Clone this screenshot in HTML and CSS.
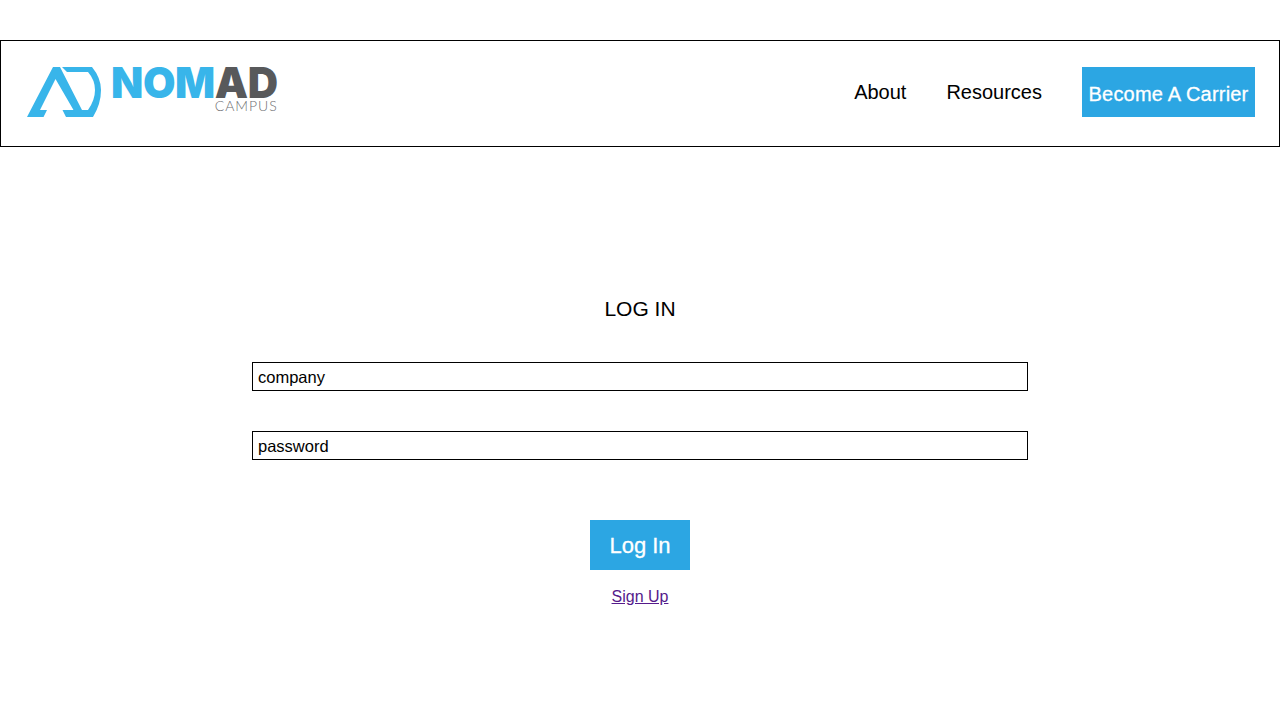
FILE: index.html
```html
<!DOCTYPE html>
<html lang="en">
<head>
<meta charset="utf-8">
<title>Nomad Campus - Log In</title>
<link rel="stylesheet" href="styles.css">
</head>
<body>
<header class="site-header">
  <a class="brand" href="#">
    <svg class="brand-mark" viewBox="0 0 75 52" width="75" height="52" aria-hidden="true">
      <path class="mark-fill" d="M0 51 L26 1 L33 1 L55 44 L61 44 Q68 34 68 24 Q68 14 61 6 L40 6 L35 1 L65 1 Q74 12 74 24 Q74 38 66 51 L39 51 L35.500 44 L46.500 44 L28.500 13 L13 44 L20 44 L16.500 51 Z"/>
    </svg>
    <span class="brand-text">
      <span class="brand-name"><span class="brand-nom">NOM</span><span class="brand-ad">AD</span></span>
      <span class="brand-sub">CAMPUS</span>
    </span>
  </a>
  <nav class="site-nav">
    <a class="nav-link" href="#">About</a>
    <a class="nav-link" href="#">Resources</a>
    <a class="nav-cta" href="#">Become A Carrier</a>
  </nav>
</header>
<main class="login">
  <h1 class="login-title">LOG IN</h1>
  <form class="login-form">
    <input class="login-input" type="text" placeholder="company">
    <input class="login-input" type="password" placeholder="password">
    <button class="login-button" type="button">Log In</button>
  </form>
  <a class="signup-link" href="#">Sign Up</a>
</main>
</body>
</html>
```
FILE: styles.css
```css
* { box-sizing: border-box; }
html, body { margin: 0; padding: 0; }
body {
  background: #fff;
  color: #000;
  font-family: "Liberation Sans", Arial, sans-serif;
  height: 728px;
  overflow: hidden;
  padding-top: 40px;
}
.site-header {
  height: 107px;
  border: 1px solid #000;
  display: flex;
  justify-content: space-between;
  align-items: flex-start;
  padding: 26px 24px 0 26px;
}
.brand {
  display: flex;
  align-items: flex-start;
  gap: 9px;
  margin-top: -1px;
  text-decoration: none;
}
.brand-mark { display: block; flex: none; }
.mark-fill { fill: #38b5ea; }
.brand-text { display: flex; flex-direction: column; align-items: flex-end; }
.brand-name {
  font-family: Inter, "Liberation Sans", sans-serif;
  font-weight: 900;
  font-size: 42px;
  line-height: 33px;
  letter-spacing: -0.4px;
  white-space: nowrap;
}
.brand-nom { color: #38b5ea; }
.brand-ad { color: #58595b; }
.brand-sub {
  font-family: Lato, "Liberation Sans", sans-serif;
  font-weight: 300;
  font-size: 14px;
  line-height: 14px;
  color: #6d6e71;
  letter-spacing: 1px;
}
.site-nav { display: flex; align-items: flex-start; }
.nav-link {
  color: #000;
  text-decoration: none;
  font-size: 20px;
  line-height: 50px;
  margin-right: 40px;
}
.nav-cta {
  display: block;
  width: 173px;
  height: 50px;
  background: #2ca6e3;
  color: #fff;
  font-size: 20px;
  letter-spacing: 0.2px;
  -webkit-text-stroke: 0.3px #fff;
  line-height: 54px;
  text-align: center;
  text-decoration: none;
  white-space: nowrap;
}
.login {
  display: flex;
  flex-direction: column;
  align-items: center;
  padding-top: 150px;
}
.login-title {
  margin: 0;
  font-size: 21px;
  font-weight: 400;
  line-height: 24px;
}
.login-form {
  display: flex;
  flex-direction: column;
  align-items: center;
  margin-top: 41px;
}
.login-input {
  display: block;
  width: 776px;
  height: 29px;
  border: 1px solid #000;
  border-radius: 0;
  padding: 2px 5px 0;
  margin: 0 0 40px;
  font-family: inherit;
  font-size: 16.500px;
  background: #fff;
  outline: none;
}
.login-input::placeholder { color: #000; opacity: 1; }
.login-button {
  width: 100px;
  height: 50px;
  margin-top: 20px;
  border: 0;
  background: #2ca6e3;
  color: #fff;
  font-family: inherit;
  font-size: 22px;
  -webkit-text-stroke: 0.3px #fff;
  padding: 2px 0 0;
}
.signup-link {
  margin-top: 18px;
  font-size: 16px;
  line-height: 18px;
  color: #551a8b;
}
```
